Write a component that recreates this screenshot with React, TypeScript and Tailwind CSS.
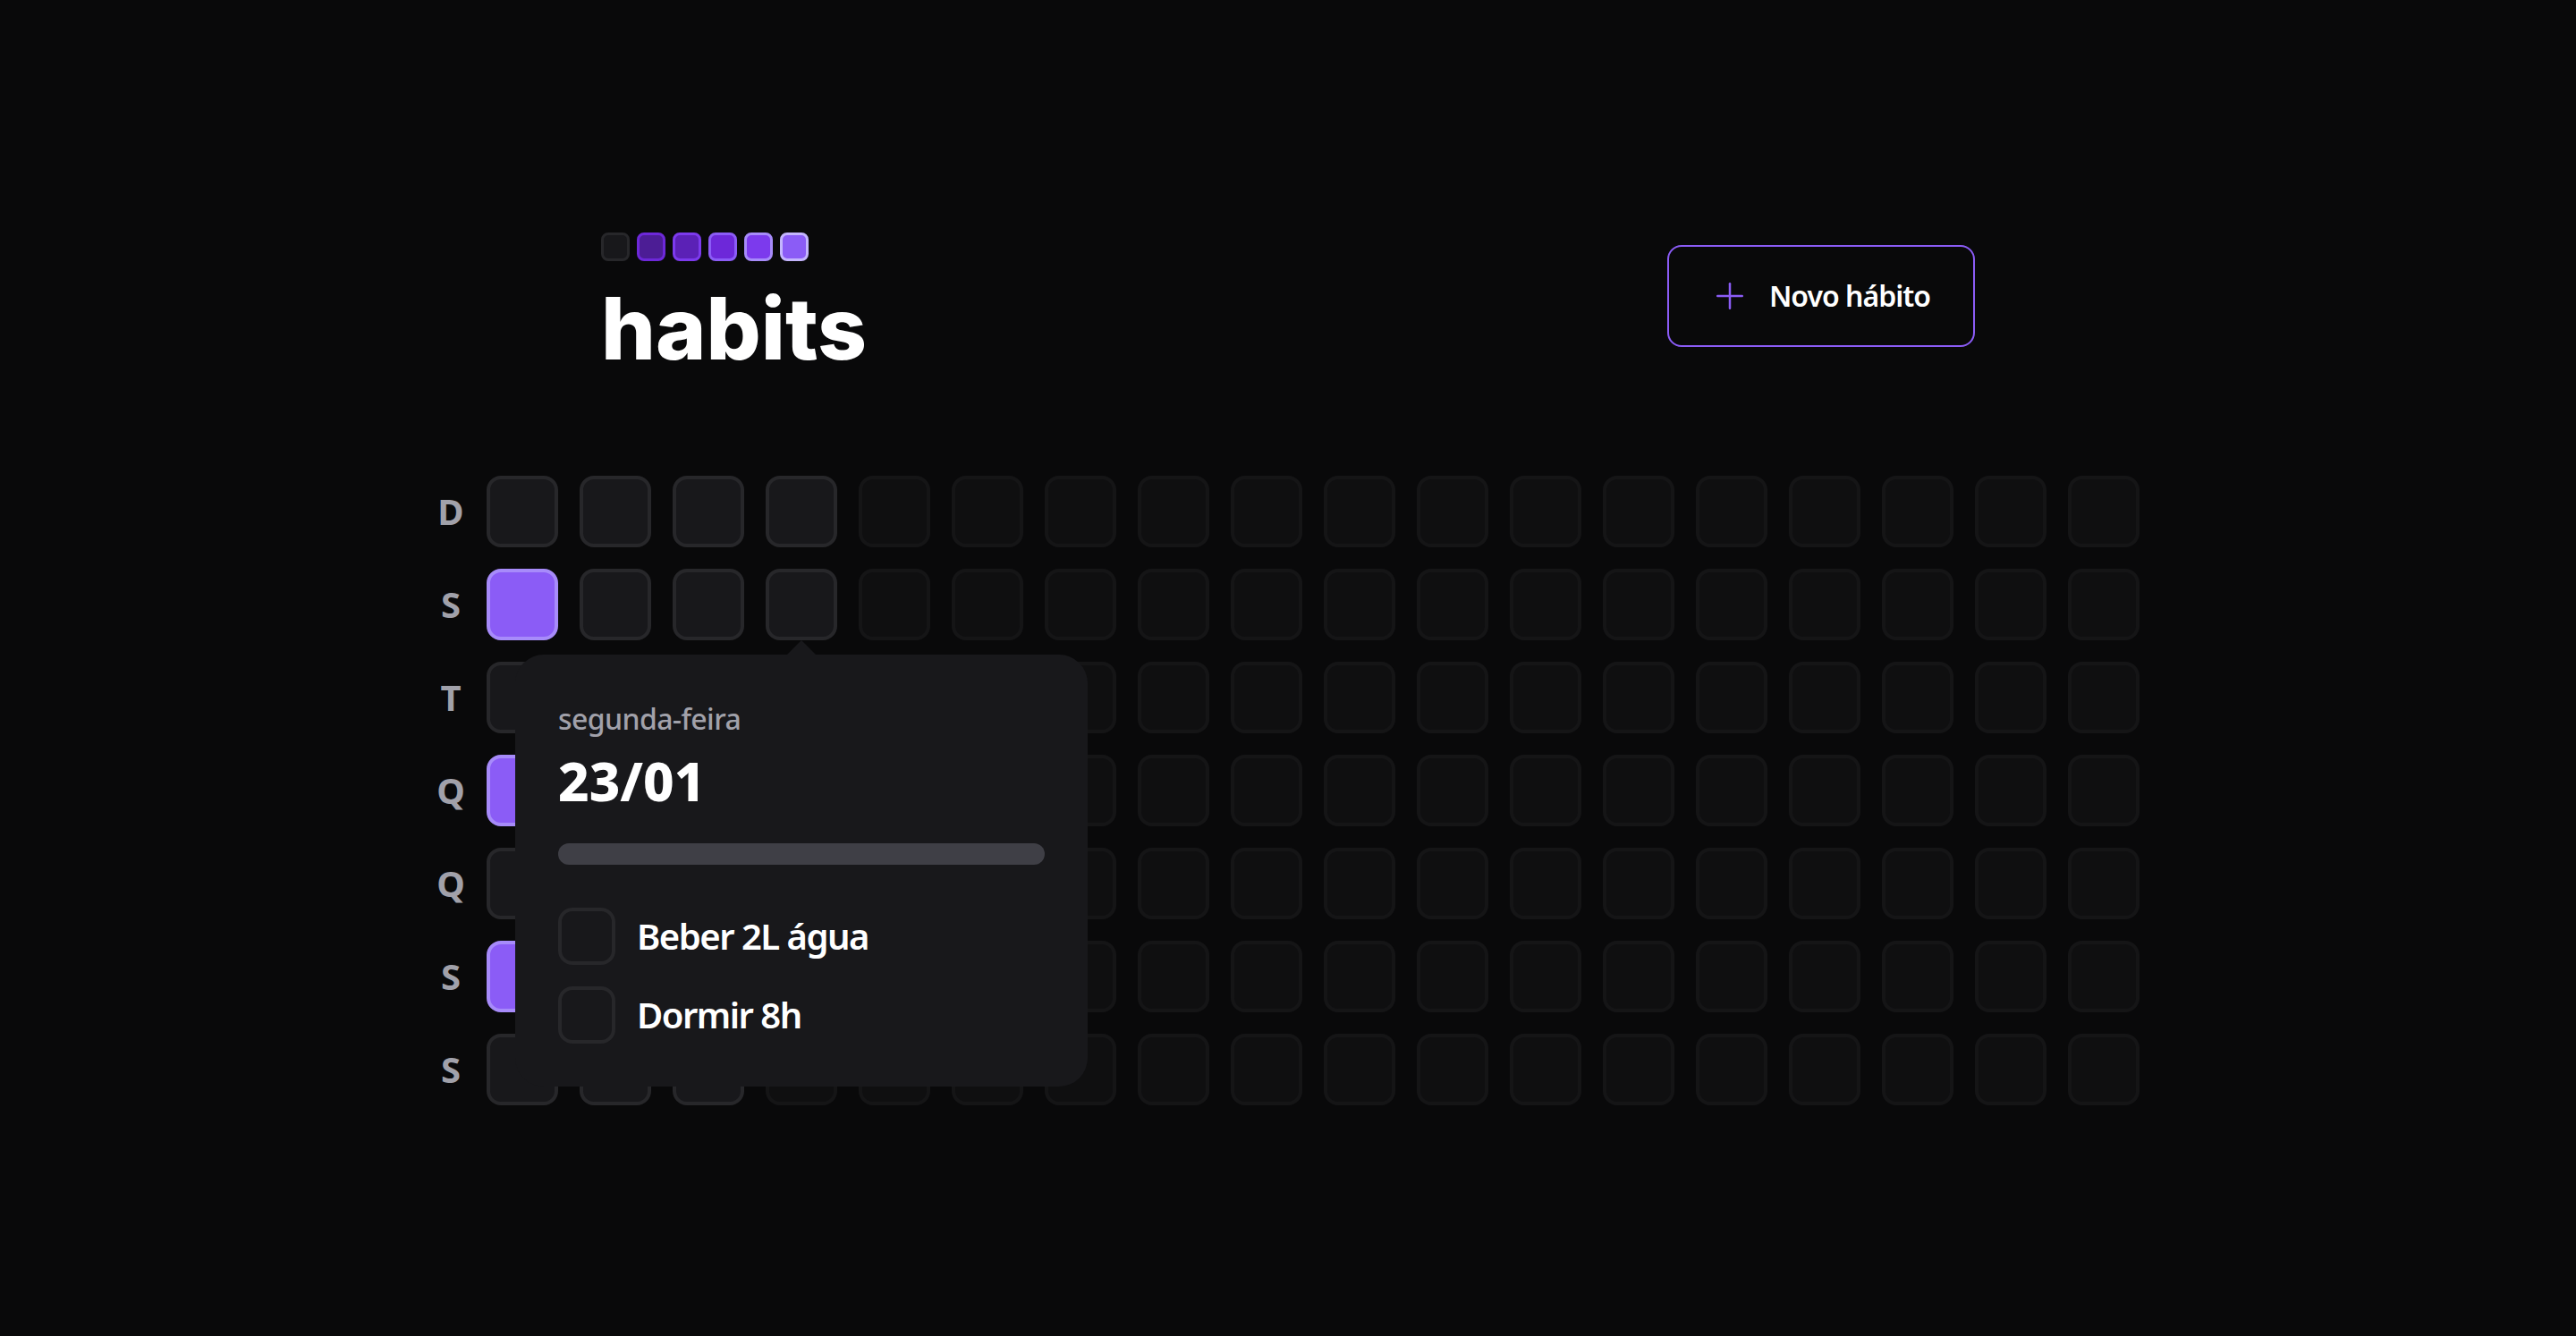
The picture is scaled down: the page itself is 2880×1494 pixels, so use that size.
import React from 'react'

const WEEK_DAYS = ['D', 'S', 'T', 'Q', 'Q', 'S', 'S']

// index of days since 01/01 (sunday), only first 23 are real summary days
const SUMMARY_DAYS = 23
const TOTAL_CELLS = 18 * 7
const COMPLETED = [1, 3, 5]

const LOGO_SQUARES = [
  'bg-[#18181b] border-[#27272a]',
  'bg-[#4c1d95] border-[#6d28d9]',
  'bg-[#5b21b6] border-[#7c3aed]',
  'bg-[#6d28d9] border-[#8b5cf6]',
  'bg-[#7c3aed] border-[#a78bfa]',
  'bg-[#8b5cf6] border-[#c4b5fd]',
]

function PlusIcon() {
  return (
    <svg width="40" height="40" viewBox="0 0 256 256" fill="none">
      <line x1="40" y1="128" x2="216" y2="128" stroke="#8b5cf6" strokeWidth="16" strokeLinecap="round" />
      <line x1="128" y1="40" x2="128" y2="216" stroke="#8b5cf6" strokeWidth="16" strokeLinecap="round" />
    </svg>
  )
}

function Header() {
  return (
    <div className="w-full max-w-[1536px] mx-auto flex items-center justify-between">
      <div className="h-[146px] flex flex-col">
        <div className="flex gap-[8px] pt-[2px]">
          {LOGO_SQUARES.map((c, i) => (
            <div key={i} className={`w-[32px] h-[32px] rounded-[8px] border-[3px] ${c}`} />
          ))}
        </div>
        <h1 className="mt-[38px] font-['Inter',sans-serif] font-extrabold text-[96px] leading-[74px] text-white">
          habits
        </h1>
      </div>

      <button
        type="button"
        className="h-[114px] border-2 border-[#8b5cf6] rounded-[16px] px-[48px] flex items-center gap-[24px] font-semibold text-[32px] tracking-[-1px] text-white"
      >
        <PlusIcon />
        Novo hábito
      </button>
    </div>
  )
}

function HabitsPopover() {
  return (
    <div className="absolute left-[32px] top-[200px] w-[640px] p-[48px] rounded-[32px] bg-[#18181b] flex flex-col z-10">
      {/* arrow */}
      <svg className="absolute -top-[16px] left-[304px]" width="32" height="16" viewBox="0 0 32 16">
        <polygon points="0,16 16,0 32,16" fill="#18181b" />
      </svg>

      <span className="font-medium text-[32px] leading-[48px] tracking-[-0.6px] text-[#a1a1aa]">segunda-feira</span>
      <span className="mt-[8px] font-extrabold text-[60px] leading-[75px] text-white">23/01</span>

      <div className="mt-[32px] h-[24px] w-full rounded-[24px] bg-[#3f3f46]" />

      <div className="mt-[48px] flex flex-col gap-[24px]">
        {['Beber 2L água', 'Dormir 8h'].map((habit) => (
          <div key={habit} className="flex items-center gap-[24px]">
            <div className="w-[64px] h-[64px] rounded-[16px] bg-[#18181b] border-[4px] border-[#27272a]" />
            <span className="font-semibold text-[40px] leading-tight tracking-[-1.5px] text-white">{habit}</span>
          </div>
        ))}
      </div>
    </div>
  )
}

function SummaryTable() {
  return (
    <div className="w-full flex">
      <div className="grid grid-rows-7 grid-flow-row gap-[24px]">
        {WEEK_DAYS.map((d, i) => (
          <div
            key={i}
            className="w-[80px] h-[80px] flex items-center justify-center text-[40px] font-bold text-[#a1a1aa]"
          >
            {d}
          </div>
        ))}
      </div>

      <div className="relative grid grid-rows-7 grid-flow-col gap-[24px]">
        {Array.from({ length: TOTAL_CELLS }).map((_, i) => {
          if (i >= SUMMARY_DAYS) {
            return (
              <div
                key={i}
                className="w-[80px] h-[80px] rounded-[16px] bg-[#18181b] border-[4px] border-[#27272a] opacity-40"
              />
            )
          }
          const done = COMPLETED.includes(i)
          return (
            <div
              key={i}
              className={
                done
                  ? 'w-[80px] h-[80px] rounded-[16px] bg-[#8b5cf6] border-[4px] border-[#a78bfa]'
                  : 'w-[80px] h-[80px] rounded-[16px] bg-[#18181b] border-[4px] border-[#27272a]'
              }
            />
          )
        })}

        <HabitsPopover />
      </div>
    </div>
  )
}

export default function App() {
  return (
    <div className="w-full h-[1494px] flex justify-center items-center bg-[#09090a] font-['Noto_Sans',sans-serif]">
      <div className="w-full max-w-[2048px] px-[48px] flex flex-col gap-[128px]">
        <Header />
        <SummaryTable />
      </div>
    </div>
  )
}
